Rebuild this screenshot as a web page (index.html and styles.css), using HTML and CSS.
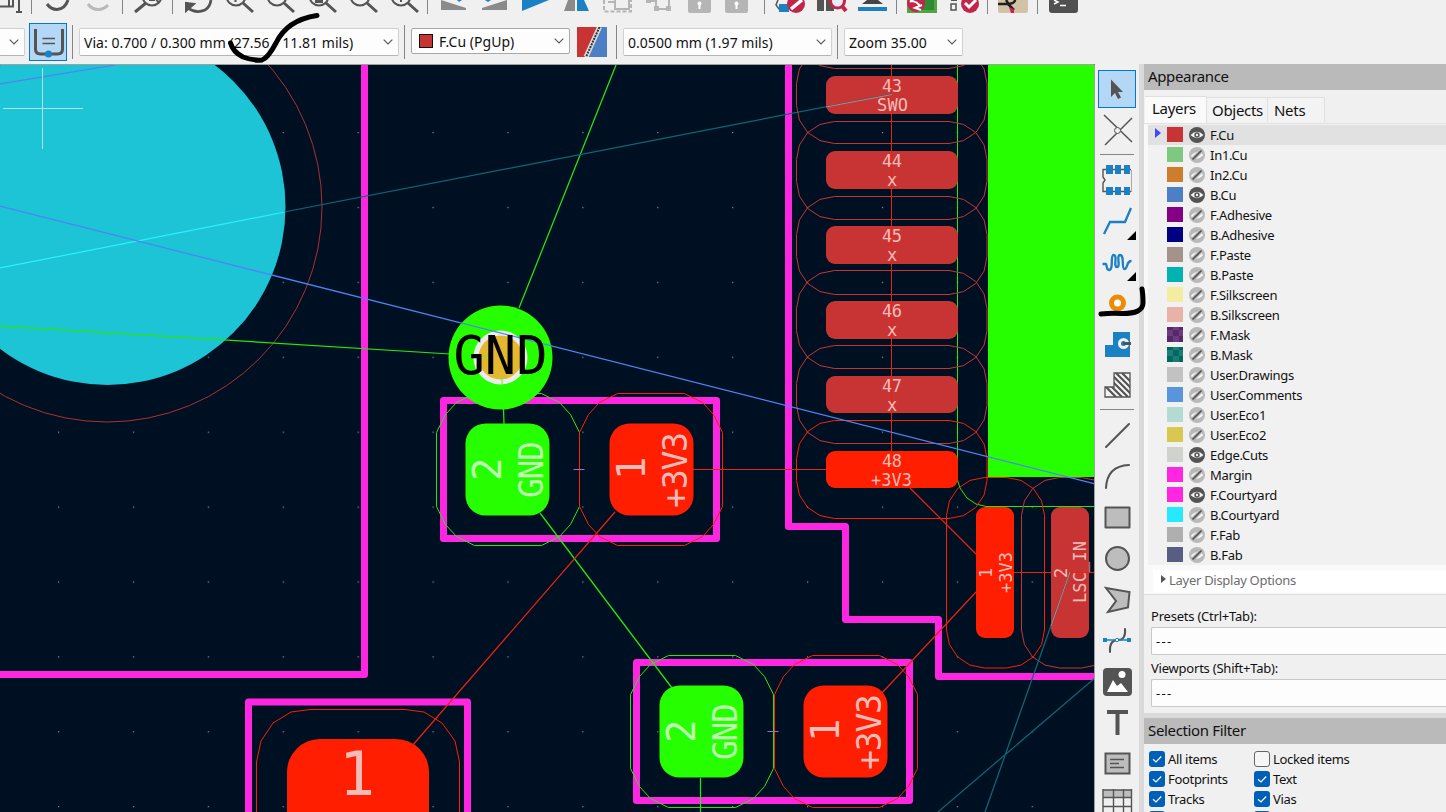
FILE: index.html
```html
<!DOCTYPE html>
<html lang="en">
<head>
<meta charset="utf-8">
<title>PCB Editor</title>
<link rel="stylesheet" href="styles.css">
</head>
<body>
<svg class="defs" width="0" height="0" aria-hidden="true">
  <defs>
    <symbol id="eye" viewBox="0 0 16 16"><circle cx="8" cy="8" r="8" fill="#545454"/><path d="M1.5 8Q8 1.5 14.5 8Q8 14.5 1.5 8z" fill="#f3f3f3"/><circle cx="8" cy="8" r="2.7" fill="#545454"/><circle cx="8" cy="8" r="1.2" fill="#f3f3f3"/></symbol>
    <symbol id="off" viewBox="0 0 16 16"><circle cx="8" cy="8" r="8" fill="#b9b9b9"/><path d="M1.8 9Q5 4.500 11 4.500L14.200 8Q11 12.200 5 12z" fill="#f3f3f3"/><path d="M3 13L13 3" stroke="#b9b9b9" stroke-width="4"/><path d="M3.500 12.500L12.500 3.500" stroke="#545454" stroke-width="1.700"/></symbol>
    <symbol id="chev" viewBox="0 0 10 6"><path d="M.7 .7L5 5L9.300 .7" fill="none" stroke="#555" stroke-width="1.100"/></symbol>
    <symbol id="tick" viewBox="0 0 16 16"><path d="M4 8.200L7 11L12.200 5.500" fill="none" stroke="#fff" stroke-width="1.200"/></symbol>
  </defs>
</svg>
<div class="app">
  <header class="toolbars">
    <div class="tools">
      <svg width="124" height="15" viewBox="0 0 124 15"><g fill="none" stroke="#545454" stroke-width="2"><path d="M0 6.500H13V0M9 6V0M19 0V11M16 12H22"/><path d="M47 4Q51 9.500 57 9.500Q65 9 68 0" stroke-width="3"/><path d="M88 4Q92 9.500 98 9.500Q104 9.500 108 5" stroke="#b9b9b9" stroke-width="3"/></g><path d="M31.500 0V14M122.500 0V14" stroke="#858585"/></svg>
      <svg width="305" height="15" viewBox="124 0 305 15"><g fill="none" stroke="#545454" stroke-width="2"><circle cx="152" cy="-4" r="9.500"/><path d="M146 3L135 12" stroke-width="3"/><path d="M149 0L155 0M156 -1L159 3"/><path d="M188 8Q196 14 205 10Q210 7 211 0" stroke-width="2.700"/><path d="M186 11V3L194 4z" fill="#545454"/><circle cx="236" cy="-4" r="9.500"/><circle cx="277" cy="-4" r="9.500"/><circle cx="319" cy="-4" r="9.500"/><circle cx="360" cy="-4" r="9.500"/><circle cx="401" cy="-4" r="9.500"/><path d="M243 3L253 12M284 3L294 12M326 3L336 12M367 3L377 12M408 3L418 12" stroke-width="3"/><path d="M235.500 0V2M401 0V2M315 0H323M315 2H323"/></g><path d="M172.500 0V14M427.500 0V14" stroke="#858585"/></svg>
      <svg width="337" height="15" viewBox="429 0 337 15"><g fill="#8a8a8a"><path d="M441 0L466 8V10H441zM507 0L482 8V10H507zM568 0H575V11H564z"/></g><g fill="#1c80c4"><path d="M522 0H549L522 11zM577 0H584L589 11H577zM457 0H462L459 2zM485 0H491L488 2z"/></g><path d="M604 0V11.500H631V0" fill="none" stroke="#b5b5b5" stroke-width="2" stroke-dasharray="4 2"/><g fill="#f0f0f0" stroke="#b5b5b5" stroke-width="2"><path d="M608 2H615V0M615 0V9H629V0M656 0V9H669V0M647 1H657"/></g><g fill="#b5b5b5"><path d="M646 0H651V3H646zM666 6H671V11H666zM654 6H659V11H654zM688 0H711V11Q711 13 709 13H690Q688 13 688 11zM725 0H748V11Q748 13 746 13H727Q725 13 725 11z"/></g><g fill="#fff"><circle cx="699.500" cy="3.500" r="2"/><path d="M698.500 4H700.500V9H698.500z"/><circle cx="736.500" cy="3.500" r="2"/><path d="M735.500 4H737.500V9H735.500z"/></g><path d="M764.500 0V14" stroke="#858585"/></svg>
      <svg width="320" height="15" viewBox="766 0 320 15"><path d="M778 0L776 5L779 9H789" fill="none" stroke="#545454" stroke-width="1.500"/><path d="M779 4H789V12H779z" fill="#1c80c4"/><circle cx="796" cy="4" r="9" fill="#c3254a"/><path d="M791 9L802 0" stroke="#fff" stroke-width="3.500"/><path d="M817 0H824V11H817zM826 0H834V11H826z" fill="#545454"/><circle cx="837.500" cy="1" r="7" fill="#e8ecf4" stroke="#c3254a" stroke-width="3"/><path d="M842 6L846 11" stroke="#c3254a" stroke-width="4"/><path d="M862 4L867 0H878L883 4z" fill="#454545"/><path d="M858 7H887V11H858z" fill="#1c80c4"/><path d="M907 0H937V13H907z" fill="#55a245"/><path d="M924 0H934V10H921z" fill="#2e8b34"/><circle cx="916" cy="3" r="9" fill="#c3254a"/><path d="M910 1Q918 1 920 7M910 2L914 -2M921 10L915 8L922 5" fill="none" stroke="#fff" stroke-width="2"/><rect x="951" y="4" width="5" height="6" fill="#f4f4f4" stroke="#545454" stroke-width="1.500"/><path d="M951 0H957" stroke="#545454" stroke-width="2"/><circle cx="970" cy="4" r="9" fill="#c3254a"/><path d="M965 3L969 7L976 0" fill="none" stroke="#fff" stroke-width="3"/><path d="M998 0H1028V11Q1028 13 1026 13H1000Q998 13 998 11z" fill="#d2c3a7"/><path d="M998 4H1008L1014 10M1006 0L1010 6M1009 4Q1015 3 1015 0" fill="none" stroke="#202020" stroke-width="2.500"/><path d="M1009 7L1014 9V13H1011z" fill="#c3254a"/><path d="M1049 0H1078V10Q1078 13 1075 13H1052Q1049 13 1049 10z" fill="#505050"/><path d="M1054 0L1058 2L1054 4M1060 5.500H1066" fill="none" stroke="#fff" stroke-width="1.500"/><path d="M896.500 0V14M987.500 0V14M1037.500 0V14" stroke="#858585"/></svg>
    </div>
    <div class="settings">
      <div class="combo stub"><svg class="chev"><use href="#chev"/></svg></div>
      <button class="track"><svg width="36" height="36" viewBox="0 0 36 36"><path d="M5.500 5V25Q5.500 30 10.500 30H27.500Q32.500 30 32.500 25V5" fill="none" stroke="#545454" stroke-width="3"/><path d="M12.500 14.500H25M12.500 19.500H25" stroke="#545454" stroke-width="1.500"/><circle cx="18.500" cy="30" r="3.500" fill="#1c80c4"/></svg></button>
      <i class="sep"></i>
      <div class="combo via"><span>Via: 0.700 / 0.300 mm (27.56 / 11.81 mils)</span><svg class="chev"><use href="#chev"/></svg></div>
      <i class="sep"></i>
      <div class="combo layer"><b class="chip"></b><span>F.Cu (PgUp)</span><svg class="chev"><use href="#chev"/></svg></div>
      <svg class="pair" width="30" height="30" viewBox="0 0 30 30"><path d="M0 0H23L8 30H0z" fill="#c83434"/><path d="M23 0H30V30H8z" fill="#4d7fc4"/><path d="M22.500 0L9 30" stroke="#ddd" stroke-width="5"/><path d="M22.500 0L9 30" stroke="#333" stroke-width="2" stroke-dasharray="2 1"/></svg>
      <i class="sep"></i>
      <div class="combo grid"><span>0.0500 mm (1.97 mils)</span><svg class="chev"><use href="#chev"/></svg></div>
      <i class="sep"></i>
      <div class="combo zoom"><span>Zoom 35.00</span><svg class="chev"><use href="#chev"/></svg></div>
    </div>
  </header>
  <main class="work">
    <svg class="board" width="1095" height="748" viewBox="0 64 1095 748">
      <defs>
        <pattern id="dots" x="58" y="132" width="74.900" height="74.900" patternUnits="userSpaceOnUse"><rect width="1.200" height="1.200" fill="#8b929b"/></pattern>
        <path id="clr" d="M0 38L2.900 23.500L11.100 11.100L23.500 2.900L38 0H152.500L167 2.900L179.400 11.100L187.600 23.500L190.500 38V60L187.600 74.500L179.400 86.900L167 95.100L152.500 98H38L23.500 95.100L11.100 86.900L2.900 74.500L0 60z"/>
        <path id="clr2" d="M0 39L9 21L20 9L38 0H105L123 9L134 21L143 39V113L134 131L123 143L105 152H38L20 143L9 131L0 113z"/>
      </defs>
      <rect y="64" width="1095" height="748" fill="#001023"/>
      <rect y="64" width="1095" height="748" fill="url(#dots)"/>
      <path d="M988 65H1095V477H988z" fill="#26ff00"/>
      <circle cx="107.500" cy="207" r="178" fill="#1cc4d6"/>
      <circle cx="107" cy="207" r="215" fill="none" stroke="#b02e33"/>
      <g fill="none" stroke="#ff26e2" stroke-width="7" stroke-linejoin="round">
        <path d="M364.500 60V674.500H-5M248.500 820V702H467.500V820M443.500 400.500H716.500V538.500H443.500zM636.500 662.500H909.500V800.500H636.500zM788.500 60V526.500H845.500V619.500H938.500V676.500H1100"/>
      </g>
      <g fill="none" stroke="#26e610">
        <path d="M957.500 65V480L960 488L967 498L976 504L986 506.500H1095"/>
        <use href="#clr2" x="436.500" y="393.500"/><use href="#clr2" x="630.500" y="655.500"/>
      </g>
      <g fill="none" stroke="#c83434">
        <use href="#clr" x="796.500" y="-29.500"/><use href="#clr" x="796.500" y="45.500"/><use href="#clr" x="796.500" y="121.500"/><use href="#clr" x="796.500" y="196.500"/><use href="#clr" x="796.500" y="270.500"/><use href="#clr" x="796.500" y="345.500"/>
        <use href="#clr" transform="translate(1119.500 477.500) rotate(90)"/>
      </g>
      <g fill="none" stroke="#ff1e00">
        <use href="#clr" x="796.500" y="420.500"/><use href="#clr" transform="translate(1044.500 477.500) rotate(90)"/>
        <use href="#clr2" x="579.500" y="393.500"/><use href="#clr2" x="774.500" y="655.500"/>
        <path d="M256.500 820V762L261 741L273 723L291 712L310 709.500H405L424 712L442 723L455 741L459.500 762V820"/>
      </g>
      <g fill="#c83434">
        <rect x="826" y="76" width="132" height="38" rx="9"/><rect x="826" y="151" width="132" height="38" rx="9"/><rect x="826" y="226" width="132" height="38" rx="9"/><rect x="826" y="301" width="132" height="38" rx="9"/><rect x="826" y="376" width="132" height="37" rx="9"/><rect x="1051" y="507" width="38" height="131" rx="9"/>
      </g>
      <g fill="#ff1e00">
        <rect x="826" y="451" width="132" height="37" rx="9"/><rect x="976" y="507" width="38" height="131" rx="9"/><rect x="609.500" y="423.500" width="84" height="92" rx="20"/><rect x="803.500" y="685.500" width="84" height="92" rx="20"/><rect x="287" y="739" width="142" height="150" rx="33"/>
      </g>
      <g fill="#26ff00"><rect x="465.500" y="423.500" width="84" height="92" rx="20"/><rect x="659.500" y="685.500" width="84" height="92" rx="20"/></g>
      <path d="M573.500 469.500H584.500M767.500 731.500H778.500" stroke="#b06ac0" fill="none"/>
      <g fill="none" stroke="#26e610" stroke-width="1.250"><path d="M616 65L519 308M0 326L450 354M503.500 409L504 424M540 513L672 688M700.500 778V812"/></g>
      <g fill="none" stroke="#e6240f"><path d="M615 512L412 746M910 488L976 554M976 592L882 693" stroke-width="1.250"/><path d="M693 469.500H826M1014 572.500H1095M891.500 65V451"/></g>
      <circle cx="500.500" cy="357.500" r="52" fill="#26ff00"/><circle cx="500.500" cy="357.500" r="24.500" fill="#e3b72e" stroke="#ececec" stroke-width="5"/>
      <path d="M481 356H492M502 374V385" stroke="#7de62a"/>
      <g fill="none" stroke="#0d6873" stroke-width="1.250"><path d="M284 212L892 94M1095 678L938 812M1070 572L985 812"/></g>
      <path d="M826 107L892 94.500M1070 572L1051 626" stroke="#bd8583" fill="none"/>
      <path d="M0 268L285 212" stroke="#2bf0ff" stroke-width="1.250"/>
      <path d="M0 206L1095 484M0 84L115 65" stroke="#5083f5" stroke-width="1.250"/>
      <path d="M3 108.500H83M42.500 68V149" stroke="#a9e4ec"/>
      <g class="pad-text">
        <text x="882" y="91.500" textLength="20">43</text><text x="877" y="111" textLength="31">SWO</text>
        <text x="882" y="166.500" textLength="20">44</text><text x="887" y="186">x</text>
        <text x="882" y="241.500" textLength="20">45</text><text x="887" y="261">x</text>
        <text x="882" y="316.500" textLength="20">46</text><text x="887" y="336">x</text>
        <text x="882" y="391.500" textLength="20">47</text><text x="887" y="411">x</text>
        <text x="882" y="466.500" textLength="20">48</text><text x="871" y="486" textLength="41">+3V3</text>
        <text transform="translate(991.500 578) rotate(-90)">1</text><text transform="translate(1012 593) rotate(-90)" textLength="41">+3V3</text>
        <text transform="translate(1067 578) rotate(-90)">2</text><text transform="translate(1086 603) rotate(-90)" textLength="62">LSC_IN</text>
      </g>
      <g class="pad-net">
        <text transform="translate(543 498) rotate(-90)" textLength="57" class="on-green">GND</text><text transform="translate(686.500 508) rotate(-90)" textLength="76">+3V3</text>
        <text transform="translate(737 760) rotate(-90)" textLength="57" class="on-green">GND</text><text transform="translate(880.500 770) rotate(-90)" textLength="76">+3V3</text>
      </g>
      <g class="pad-num">
        <text transform="translate(501 481) rotate(-90)" class="on-green">2</text><text transform="translate(644.500 480) rotate(-90)">1</text>
        <text transform="translate(695 743) rotate(-90)" class="on-green">2</text><text transform="translate(838.500 742) rotate(-90)">1</text>
      </g>
      <text x="339" y="795" class="pad-big">1</text>
      <text x="453.500" y="374" textLength="94" lengthAdjust="spacingAndGlyphs" class="via-text">GND</text>
      <path d="M0 64.500H1094.500V812" fill="none" stroke="#a0a0a0"/>
    </svg>
    <nav class="draw">
      <svg width="44" height="96" viewBox="1095 64 44 96"><rect x="1098.500" y="70.500" width="37" height="37" fill="#b3d7f5" stroke="#0078d7"/><path d="M1111 79.500V97L1115 93L1118 99L1121 97.500L1118 92H1123z" fill="#545454"/><path d="M1104 115L1132 142M1132 118L1105 145" stroke="#545454" stroke-width="1.500"/><circle cx="1117.500" cy="130.500" r="3" fill="#f0f0f0" stroke="#545454"/><path d="M1100 154.500H1134" stroke="#858585"/></svg>
      <svg width="44" height="160" viewBox="1095 160 44 160"><path d="M1106 169.500H1103V177L1105 180L1103 183V191.500H1106M1106 169.500H1131M1106 191.500H1131" fill="none" stroke="#545454" stroke-width="1.400"/><path d="M1131.500 170V192" stroke="#aaa"/><path d="M1106 165H1113V174H1106zM1115 165H1121V174H1115zM1124 165H1130V174H1124zM1106 187H1113V195H1106zM1115 187H1121V195H1115zM1124 187H1130V195H1124z" fill="#1c80c4"/><path d="M1104 234L1110 222H1125L1131 208" fill="none" stroke="#1c80c4" stroke-width="2.300"/><path d="M1102.500 264H1106C1107 264 1106 270 1109 270C1114 270 1110 255 1113.500 255C1118 255 1113 267 1117 267C1121 267 1116 255 1120 255C1125 255 1121 269 1124.500 269C1128 269 1126 261 1131.500 261" fill="none" stroke="#1c80c4" stroke-width="2.300"/><path d="M1136 231V240H1127zM1136 272V281H1127z"/><circle cx="1117.500" cy="303" r="6" fill="#fff" stroke="#ee8a08" stroke-width="5"/></svg>
      <svg width="44" height="95" viewBox="1095 320 44 95"><path d="M1113 332H1130V357H1105V345H1113z" fill="#1c80c4"/><circle cx="1123.500" cy="343.500" r="4" fill="#1c80c4" stroke="#f0f0f0" stroke-width="3"/><path d="M1123 343.500H1131" stroke="#545454" stroke-width="3"/><clipPath id="zone"><path d="M1114 373H1130V397H1105V387H1114z"/></clipPath><g clip-path="url(#zone)"><path d="M1105 373H1131V398H1105z" fill="#f5f5f5"/><path d="M1098 373L1122 397M1104 373L1128 397M1110 373L1134 397M1116 373L1140 397M1122 373L1146 397M1092 373L1116 397" stroke="#545454" stroke-width="2.200"/></g><path d="M1114 373H1130V397H1105V387H1114z" fill="none" stroke="#545454" stroke-width="1.300"/><path d="M1100 409.500H1134" stroke="#858585"/></svg>
      <svg width="44" height="245" viewBox="1095 415 44 245"><g fill="none" stroke="#545454" stroke-width="2" stroke-linecap="round"><path d="M1106 447L1129 424M1106 488Q1107 466 1129 465"/><g fill="#bdbdbd"><path d="M1105.500 507.500H1129.500V527.500H1105.500z" stroke-linejoin="round"/><circle cx="1117.500" cy="558.500" r="11.500"/><path d="M1106 588L1129.500 592L1128 607.500L1108 612L1116 601z"/></g><path d="M1125 629Q1126 640 1118 640M1117 640Q1109 641 1110 652"/></g><path d="M1104 640H1131" stroke="#1c80c4" stroke-width="1.500"/><path d="M1103 638H1107V642H1103zM1127 638H1131V642H1127z" fill="#1c80c4"/><circle cx="1117" cy="640" r="1.700" fill="#fff" stroke="#1c80c4"/></svg>
      <svg width="44" height="152" viewBox="1095 660 44 152"><rect x="1103" y="668" width="29" height="28" rx="4" fill="#545454"/><path d="M1107 692L1113 680L1117 686L1121 683L1128 692z" fill="#fff"/><circle cx="1122" cy="674.500" r="3.500" fill="#fff"/><path d="M1107 710H1128V714H1119.500V735H1115.500V714H1107z" fill="#545454"/><rect x="1105.500" y="753.500" width="24" height="20" fill="#bdbdbd" stroke="#545454" stroke-width="2"/><path d="M1110 759.500H1124M1110 763.500H1119M1110 767.500H1124" stroke="#545454" stroke-width="1.400"/><path d="M1103 790H1132V797H1103z" fill="#bdbdbd"/><path d="M1103 790H1132M1103 797.500H1132M1103 806.500H1132M1103 789V812M1113.500 789V812M1123.500 789V812M1131.500 789V812" stroke="#545454" stroke-width="1.400"/></svg>
    </nav>
    <aside class="side">
      <h2>Appearance</h2>
      <div class="tabs"><span class="tab on">Layers</span><span class="tab">Objects</span><span class="tab nets">Nets</span></div>
      <div class="page">
        <ul class="layers">
          <li class="cur"><i class="s1"></i><svg><use href="#eye"/></svg><span>F.Cu</span></li>
          <li><i class="s2"></i><svg><use href="#off"/></svg><span>In1.Cu</span></li>
          <li><i class="s3"></i><svg><use href="#off"/></svg><span>In2.Cu</span></li>
          <li><i class="s4"></i><svg><use href="#eye"/></svg><span>B.Cu</span></li>
          <li><i class="s5"></i><svg><use href="#off"/></svg><span>F.Adhesive</span></li>
          <li><i class="s6"></i><svg><use href="#off"/></svg><span>B.Adhesive</span></li>
          <li><i class="s7"></i><svg><use href="#off"/></svg><span>F.Paste</span></li>
          <li><i class="s8"></i><svg><use href="#off"/></svg><span>B.Paste</span></li>
          <li><i class="s9"></i><svg><use href="#off"/></svg><span>F.Silkscreen</span></li>
          <li><i class="s10"></i><svg><use href="#off"/></svg><span>B.Silkscreen</span></li>
          <li><i class="s11"></i><svg><use href="#off"/></svg><span>F.Mask</span></li>
          <li><i class="s12"></i><svg><use href="#off"/></svg><span>B.Mask</span></li>
          <li><i class="s13"></i><svg><use href="#off"/></svg><span>User.Drawings</span></li>
          <li><i class="s14"></i><svg><use href="#off"/></svg><span>User.Comments</span></li>
          <li><i class="s15"></i><svg><use href="#off"/></svg><span>User.Eco1</span></li>
          <li><i class="s16"></i><svg><use href="#off"/></svg><span>User.Eco2</span></li>
          <li><i class="s17"></i><svg><use href="#eye"/></svg><span>Edge.Cuts</span></li>
          <li><i class="s18"></i><svg><use href="#off"/></svg><span>Margin</span></li>
          <li><i class="s18"></i><svg><use href="#eye"/></svg><span>F.Courtyard</span></li>
          <li><i class="s19"></i><svg><use href="#off"/></svg><span>B.Courtyard</span></li>
          <li><i class="s20"></i><svg><use href="#off"/></svg><span>F.Fab</span></li>
          <li><i class="s21"></i><svg><use href="#off"/></svg><span>B.Fab</span></li>
        </ul>
        <div class="options"><span>Layer Display Options</span></div>
      </div>
      <div class="presets">
        <label>Presets (Ctrl+Tab):</label><div class="field">---</div>
        <label>Viewports (Shift+Tab):</label><div class="field">---</div>
      </div>
      <h2 class="filter-title">Selection Filter</h2>
      <div class="filter">
        <span class="check"><svg class="box"><use href="#tick"/></svg><em>All items</em></span><span class="check"><svg class="box empty"></svg><em>Locked items</em></span>
        <span class="check"><svg class="box"><use href="#tick"/></svg><em>Footprints</em></span><span class="check"><svg class="box"><use href="#tick"/></svg><em>Text</em></span>
        <span class="check"><svg class="box"><use href="#tick"/></svg><em>Tracks</em></span><span class="check"><svg class="box"><use href="#tick"/></svg><em>Vias</em></span>
        <span class="check"><svg class="box"></svg></span><span class="check"><svg class="box"></svg></span>
      </div>
    </aside>
  </main>
  <svg class="ink" width="1446" height="812" viewBox="0 0 1446 812"><path d="M230.500 43Q233 52 243 57Q254 61 262 60Q268 58 276 43Q287 20 317 15.500"/><path d="M1101 314Q1111 313 1121 313.500Q1143 314 1143 303Q1143 294 1142 289"/></svg>
</div>
</body>
</html>
```
FILE: styles.css
```css
* { box-sizing: border-box; }
body { margin: 0; background: #f0f0f0; color: #111; font: 15px/20px "Noto Sans", "Open Sans", sans-serif; }
.defs { position: absolute; }
.app { position: relative; width: 1446px; height: 812px; overflow: hidden; display: flex; flex-direction: column; }
.app svg { display: block; flex: none; }
.toolbars { height: 64px; flex: none; }
.tools { display: flex; height: 15px; }
.settings { display: flex; height: 49px; align-items: flex-start; padding-top: 8px; }
.combo { display: flex; align-items: center; justify-content: space-between; height: 28px; margin-top: 5px; border: 1px solid #d0d0d0; border-bottom-color: #b5b5b5; border-radius: 2px; background: #fdfdfd; padding: 0 5px 0 4px; white-space: nowrap; font-size: 14px; letter-spacing: .03px; }
.combo span { padding-top: 2px; }
.combo .chev { width: 10px; height: 6px; }
.stub { width: 26px; margin-left: -1px; justify-content: flex-end; }
.track { width: 38px; height: 38px; margin: 0 5px 0 4px; padding: 0; border: 1px solid #0078d7; background: #b3d7f5; }
.sep { width: 1px; height: 34px; margin-top: 2px; background: #858585; }
.via { width: 320px; margin-left: 6px; margin-right: 5px; }
.layer { width: 159px; height: 26px; margin: 5px 7px 0 6px; border-color: #a8a8a8; justify-content: flex-start; padding-left: 7px; }
.layer span { flex: 1; }
.chip { width: 14px; height: 14px; margin-right: 6px; border: 1px solid #111; background: #c83434; }
.pair { margin: 4px 9px 0 0; }
.grid { width: 209px; margin-left: 6px; margin-right: 5px; }
.zoom { width: 119px; margin-left: 6px; }
.work { display: flex; height: 748px; }
.draw { width: 44px; display: flex; flex-direction: column; flex: none; }
.side { flex: 1; border-left: 5px solid #dadada; display: flex; flex-direction: column; min-width: 0; }
h2 { margin: 0; height: 26px; padding-left: 4px; background: #bababa; font-size: 15px; line-height: 25px; font-weight: 400; letter-spacing: -.35px; flex: none; }
.tabs { display: flex; height: 33px; align-items: flex-end; padding: 0 0 1px 1px; letter-spacing: -.3px; flex: none; }
.tab { height: 25px; width: 61px; padding-left: 5px; border: 1px solid #e0e0e0; border-bottom: 0; border-left: 0; background: #f3f3f3; line-height: 25px; }
.tab.on { width: 62px; height: 27px; padding-left: 7px; margin-bottom: -1px; background: #fafafa; line-height: 23px; }
.tab.nets { width: 57px; padding-left: 6px; }
.page { background: #f9f9f9; height: 472px; border-top: 1px solid #e2e2e2; border-bottom: 1px solid #dedede; padding-left: 4px; flex: none; }
.layers { list-style: none; margin: 0; padding: 1px 0 0; height: 441px; background: #f1f1f1; font-size: 13px; letter-spacing: -.28px; }
.layers li { display: flex; align-items: center; height: 20px; padding-left: 19px; position: relative; }
.layers i { width: 16px; height: 15px; margin-right: 6px; margin-top: -1px; }
.layers svg { width: 16px; height: 16px; margin-right: 5px; }
.layers .cur { background: #e1e1e1; }
.layers .cur::before { content: ""; position: absolute; left: 7px; top: 3px; border-left: 6px solid #4146ff; border-top: 5.500px solid transparent; border-bottom: 5.500px solid transparent; }
.s1 { background: #c83434; } .s2 { background: #7fc87f; } .s3 { background: #ce7d2c; } .s4 { background: #4d7fc4; }
.s5 { background: #840084; } .s6 { background: #000084; } .s7 { background: #a59389; } .s8 { background: #00b2b2; }
.s9 { background: #f2eda1; } .s10 { background: #e8b2a7; }
.s11 { background: repeating-conic-gradient(#562a69 0 25%, #6d3c80 0 50%) 0 3px / 12px 12px; }
.s12 { background: repeating-conic-gradient(#026860 0 25%, #1c7d74 0 50%) 0 3px / 12px 12px; }
.s13 { background: #c2c2c2; } .s14 { background: #5994dc; } .s15 { background: #b4dbd2; } .s16 { background: #d8c852; }
.s17 { background: #d0d2cd; } .s18 { background: #ff26e2; } .s19 { background: #26e9ff; } .s20 { background: #afafaf; } .s21 { background: #585d84; }
.options { margin: 5px 0 0 5px; height: 22px; padding-bottom: 3px; background: #fff; color: #6d6d6d; font-size: 13px; line-height: 18px; letter-spacing: -.28px; display: flex; align-items: center; }
.options::before { content: ""; margin: 0 3px 1px 8px; border-left: 5px solid #555; border-top: 4.500px solid transparent; border-bottom: 4.500px solid transparent; }
.presets { height: 118px; padding: 11px 0 0 7px; font-size: 13px; letter-spacing: -.22px; flex: none; display: flex; flex-direction: column; }
.presets label { height: 21px; }
.field { height: 28px; margin-bottom: 3px; border: 1px solid #c8c8c8; border-right: 0; background: #fdfdfd; padding-left: 4px; line-height: 27px; letter-spacing: 1.300px; border-radius: 2px 0 0 2px; }
.filter-title { border-top: 5px solid #dadada; height: 31px; }
.filter { display: grid; grid-template-columns: 105px 1fr; grid-auto-rows: 20px; padding: 5px 0 0 5px; font-size: 13px; letter-spacing: -.32px; }
.check { display: flex; align-items: center; gap: 3px; }
.check em { font-style: normal; }
.box { width: 16px; height: 16px; border-radius: 3px; background: #005fb8; }
.box.empty { background: #f6f6f6; border: 1px solid #666; }
.pad-text, .pad-net, .pad-num, .pad-big, .via-text { font-family: "DejaVu Sans Mono", monospace; fill: #f3bcb8; }
.pad-text { font-size: 17px; }
.pad-net { font-size: 33px; }
.pad-num { font-size: 39px; }
.pad-big { font-size: 60px; }
.pad-text text, .pad-net text, .pad-num text { fill: #f3bcb8; }
.pad-net .on-green, .pad-num .on-green { fill: #bdfbb0; }
.via-text { font-size: 53px; fill: #000; }
.ink { position: absolute; left: 0; top: 0; pointer-events: none; }
.ink path { fill: none; stroke: #000; stroke-width: 5; stroke-linecap: round; }
```
